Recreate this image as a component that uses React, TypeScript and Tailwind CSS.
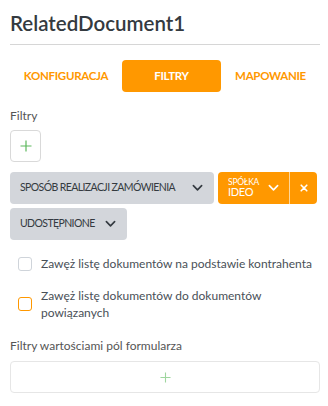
import React from 'react';

const Chevron: React.FC<{ className?: string }> = ({ className }) => (
  <svg viewBox="0 0 12 8" className={className} fill="none" stroke="currentColor" strokeWidth="1.8" strokeLinecap="round" strokeLinejoin="round">
    <path d="M1.5 1.5 6 6l4.5-4.5" />
  </svg>
);

const Plus: React.FC<{ className?: string }> = ({ className }) => (
  <svg viewBox="0 0 12 12" className={className} fill="none" stroke="currentColor" strokeWidth="1.2">
    <path d="M6 0.5v11M0.5 6h11" />
  </svg>
);

const App: React.FC = () => {
  return (
    <div className="w-[328px] h-[406px] bg-white overflow-hidden pl-[10px] pr-[8px] font-['Lato','Open_Sans',sans-serif] text-[#495057]">
      {/* header */}
      <h1 className="pt-[10px] text-[20.5px] leading-[26px] font-semibold text-[#343a40]">RelatedDocument1</h1>
      <div className="mt-[8px] h-px bg-[#d6d6d6]"></div>

      {/* tabs */}
      <div className="mt-[15px] flex h-[32px] text-[11.5px] font-bold tracking-[-0.3px]">
        <button className="w-[112px] text-center uppercase text-[#ff9800]">Konfiguracja</button>
        <button className="w-[99px] rounded-[4px] bg-[#ff9800] text-center uppercase text-white">Filtry</button>
        <button className="w-[99px] text-center uppercase text-[#ff9800]">Mapowanie</button>
      </div>

      {/* filters */}
      <div className="mt-[16px] text-[12px] leading-[15px] text-[#555]">Filtry</div>
      <button className="mt-[7px] flex h-[32px] w-[31px] items-center justify-center rounded-[4px] border border-[#d9d9d9] text-[#5cb85c]">
        <Plus className="h-[12px] w-[12px]" />
      </button>

      <div className="mt-[10px] flex flex-wrap gap-[4px]">
        <div className="flex h-[32px] w-[204px] items-center justify-between rounded-[4px] bg-[#d3d6db] pl-[10px] pr-[11px] text-[10.5px] tracking-[-0.6px] text-[#343a40]">
          <span>SPOSÓB REALIZACJI ZAMÓWIENIA</span>
          <Chevron className="h-[8px] w-[11px]" />
        </div>
        <div className="flex h-[32px] w-[99px] rounded-[4px] bg-[#ff9800] text-white">
          <div className="flex flex-1 items-center justify-between pl-[10px] pr-[10px]">
            <div className="flex flex-col leading-none">
              <span className="text-[8.5px] tracking-[-0.2px]">SPÓŁKA</span>
              <span className="text-[11px] leading-[12px] tracking-[-0.3px]">IDEO</span>
            </div>
            <Chevron className="h-[8px] w-[11px]" />
          </div>
          <div className="w-px bg-[#ffd699]"></div>
          <div className="flex w-[27px] items-center justify-center">
            <svg viewBox="0 0 10 10" className="h-[8px] w-[8px]" stroke="currentColor" strokeWidth="2" strokeLinecap="round">
              <path d="M1.5 1.5l7 7M8.5 1.5l-7 7" />
            </svg>
          </div>
        </div>
        <div className="flex h-[32px] w-[117px] items-center justify-between rounded-[4px] bg-[#d3d6db] pl-[10px] pr-[11px] text-[10.5px] tracking-[-0.6px] text-[#343a40]">
          <span>UDOSTĘPNIONE</span>
          <Chevron className="h-[8px] w-[11px]" />
        </div>
      </div>

      {/* checkboxes */}
      <div className="mt-[15px] flex items-center gap-[9px] pl-[8px] text-[12px] leading-[17px] text-[#495057]">
        <span className="h-[14px] w-[14px] shrink-0 rounded-[3px] border border-[#cfd4da] bg-white"></span>
        <span>Zawęż listę dokumentów na podstawie kontrahenta</span>
      </div>
      <div className="mt-[15px] flex items-center gap-[9px] pl-[8px] text-[12px] leading-[17px] text-[#495057]">
        <span className="h-[14px] w-[14px] shrink-0 rounded-[3px] border border-[#ff9800] bg-white"></span>
        <span>Zawęż listę dokumentów do dokumentów<br />powiązanych</span>
      </div>

      <div className="mt-[17px] text-[12px] leading-[15px] text-[#555]">Filtry wartościami pól formularza</div>
      <div className="mt-[8px] flex h-[32px] items-center justify-center rounded-[4px] border border-[#e6e6e6] text-[#9fd69f]">
        <Plus className="h-[11px] w-[11px]" />
      </div>
    </div>
  );
};

export default App;
